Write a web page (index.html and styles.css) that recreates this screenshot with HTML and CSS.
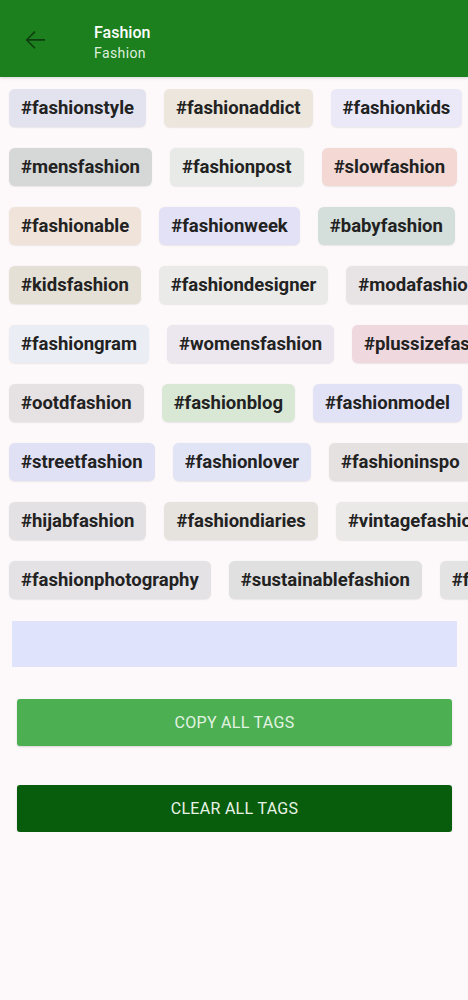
FILE: index.html
```html
<!DOCTYPE html>
<html>
<head>
<meta charset="utf-8">
<link rel="stylesheet" href="styles.css">
</head>
<body>
<header class="appbar">
  <svg class="back" width="30" height="30" viewBox="0 0 24 24"><path d="M20 11.2H6.9l5.5-5.5-0.9-0.9L4.5 12l7 7 0.9-0.9-5.5-5.5H20z" fill="#0f3d10"/></svg>
  <div class="titles">
    <div class="title">Fashion</div>
    <div class="subtitle">Fashion</div>
  </div>
</header>
<main class="content">
  <div class="tags">
    <div class="row">
      <span class="chip c1">#fashionstyle</span>
      <span class="chip c2">#fashionaddict</span>
      <span class="chip c3">#fashionkids</span>
    </div>
    <div class="row">
      <span class="chip c4">#mensfashion</span>
      <span class="chip c5">#fashionpost</span>
      <span class="chip c6">#slowfashion</span>
    </div>
    <div class="row">
      <span class="chip c7">#fashionable</span>
      <span class="chip c8">#fashionweek</span>
      <span class="chip c9">#babyfashion</span>
    </div>
    <div class="row">
      <span class="chip c10">#kidsfashion</span>
      <span class="chip c11">#fashiondesigner</span>
      <span class="chip c12">#modafashion</span>
    </div>
    <div class="row">
      <span class="chip c13">#fashiongram</span>
      <span class="chip c14">#womensfashion</span>
      <span class="chip c15">#plussizefashion</span>
    </div>
    <div class="row">
      <span class="chip c16">#ootdfashion</span>
      <span class="chip c17">#fashionblog</span>
      <span class="chip c18">#fashionmodel</span>
    </div>
    <div class="row">
      <span class="chip c19">#streetfashion</span>
      <span class="chip c20">#fashionlover</span>
      <span class="chip c21">#fashioninspo</span>
    </div>
    <div class="row">
      <span class="chip c22">#hijabfashion</span>
      <span class="chip c23">#fashiondiaries</span>
      <span class="chip c24">#vintagefashion</span>
    </div>
    <div class="row">
      <span class="chip c25">#fashionphotography</span>
      <span class="chip c26">#sustainablefashion</span>
      <span class="chip c27">#fashionista</span>
    </div>
  </div>
  <div class="input"></div>
  <button class="btn copy">COPY ALL TAGS</button>
  <button class="btn clear">CLEAR ALL TAGS</button>
</main>
</body>
</html>
```
FILE: styles.css
```css
html, body {
  margin: 0;
  padding: 0;
  background: #fdf9fa;
  font-family: Roboto, "Liberation Sans", sans-serif;
  width: 468px;
  overflow: hidden;
}
.appbar {
  height: 77px;
  background: #1c801e;
  display: flex;
  align-items: center;
  box-shadow: 0 1px 3px rgba(0,0,0,0.15);
}
.back {
  margin-left: 20px;
  margin-top: 3px;
}
.titles {
  margin-left: 44px;
  display: flex;
  flex-direction: column;
  margin-top: 7px;
}
.title {
  color: #ffffff;
  font-size: 16px;
  font-weight: 500;
  line-height: 22px;
}
.subtitle {
  color: #dcefdc;
  font-size: 14px;
  line-height: 18px;
  letter-spacing: 0.4px;
}
.content {
  padding-top: 12px;
}
.tags {
  padding-left: 9px;
  overflow: hidden;
}
.row {
  display: flex;
  flex-wrap: nowrap;
  gap: 18px;
  margin-bottom: 21px;
  white-space: nowrap;
}
.chip {
  flex: none;
  height: 38px;
  line-height: 38px;
  padding: 0 12px;
  border-radius: 6px;
  font-size: 18.5px;
  font-weight: 700;
  color: #222222;
  box-shadow: 0 0.5px 1.5px rgba(0,0,0,0.08);
}
.c1 { background: #e3e3f0; }
.c2 { background: #ece6dc; }
.c3 { background: #ebe9f8; }
.c4 { background: #d6d8d8; }
.c5 { background: #e7eae6; }
.c6 { background: #f3d8d4; }
.c7 { background: #f0e4da; }
.c8 { background: #e2e1f6; }
.c9 { background: #d4dfdb; }
.c10 { background: #e5e0d6; }
.c11 { background: #eaebe8; }
.c12 { background: #e8e4e6; }
.c13 { background: #eaeef4; }
.c14 { background: #ece6ee; }
.c15 { background: #efd9de; }
.c16 { background: #e6e1e2; }
.c17 { background: #d9e8d5; }
.c18 { background: #e2e2f6; }
.c19 { background: #e1e1f6; }
.c20 { background: #e0e4f5; }
.c21 { background: #e5e1e1; }
.c22 { background: #e4e1e4; }
.c23 { background: #e6e2de; }
.c24 { background: #ebe8e8; }
.c25 { background: #e5e2e6; }
.c26 { background: #e0e0e0; }
.c27 { background: #e4e3e3; }
.input {
  margin: 1px 11px 0 12px;
  height: 46px;
  background: #dfe3fb;
}
.btn {
  display: block;
  width: 435px;
  height: 47px;
  margin-left: 17px;
  border: none;
  border-radius: 3px;
  font-family: Roboto, "Liberation Sans", sans-serif;
  font-size: 16px;
  font-weight: 400;
  letter-spacing: 0.3px;
  box-shadow: 0 1px 2px rgba(0,0,0,0.15);
}
.copy {
  margin-top: 32px;
  background: #4caf52;
  color: #e3f3e3;
}
.clear {
  margin-top: 39px;
  background: #085d0c;
  color: #e8f3e8;
}
```
